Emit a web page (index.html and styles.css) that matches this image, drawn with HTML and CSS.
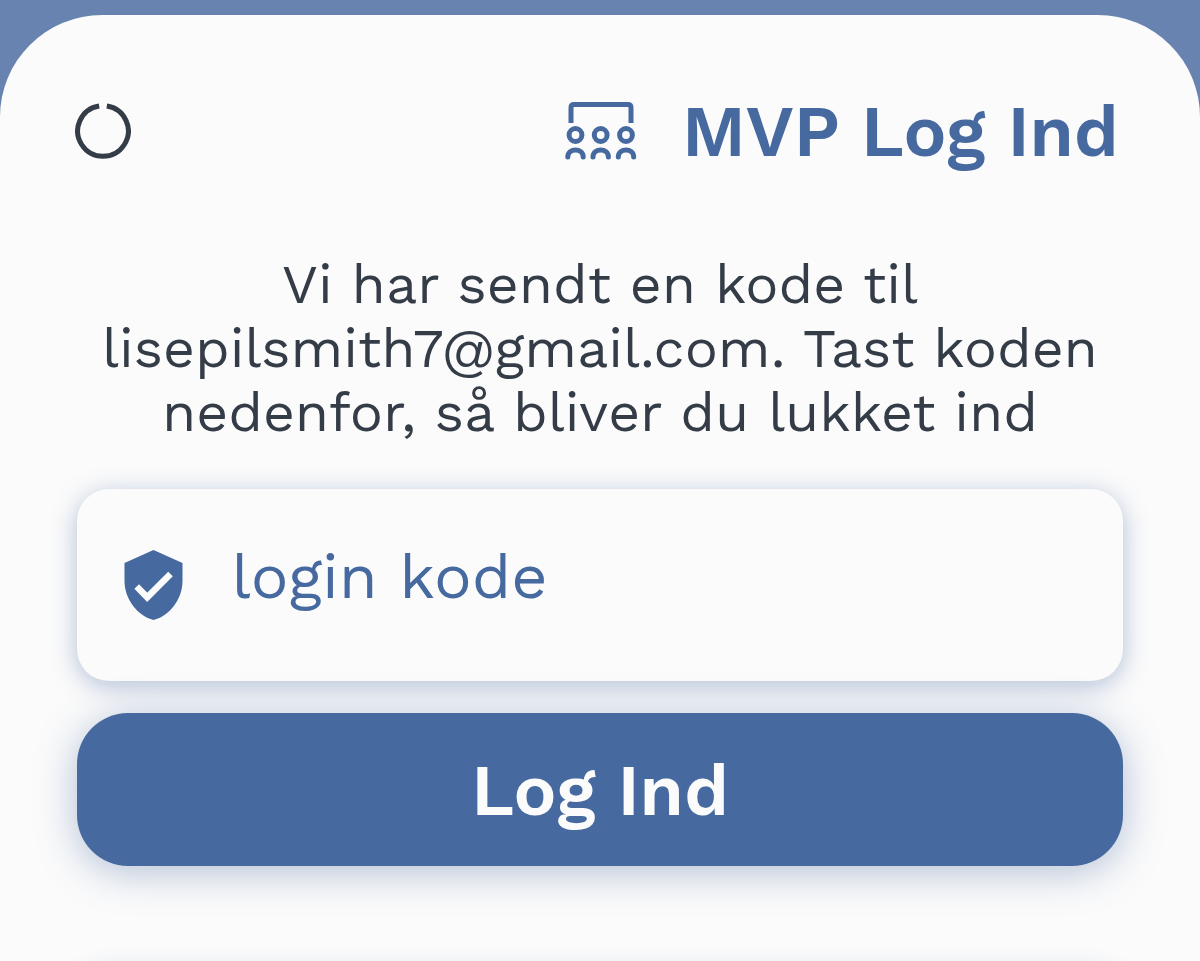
FILE: index.html
```html
<!DOCTYPE html>
<html lang="da">
<head>
<meta charset="utf-8">
<title>MVP Log Ind</title>
<link rel="stylesheet" href="styles.css">
</head>
<body>
<main class="sheet">
  <header class="header">
    <svg class="ring" viewBox="0 0 56 56" aria-hidden="true"><path d="M31.8 3A25.3 25.3 0 1 1 24.2 3"/></svg>
    <div class="brand">
      <svg class="people" viewBox="0 0 72 60" aria-hidden="true">
        <path d="M6 23V7.5Q6 4.5 9 4.5H63Q66 4.5 66 7.5V23"/>
        <circle cx="10.5" cy="35" r="6.4"/><circle cx="35.7" cy="35" r="6.4"/><circle cx="61" cy="35" r="6.4"/>
        <path class="round" d="M2.8 57C2.8 47.5 18.2 47.5 18.2 57M28 57C28 47.5 43.4 47.5 43.4 57M53.3 57C53.3 47.5 68.7 47.5 68.7 57"/>
      </svg>
      <h1 class="title">MVP Log Ind</h1>
    </div>
  </header>
  <p class="message">
    <span class="line">Vi har sendt en kode til</span>
    <span class="line">lisepilsmith7@gmail.com. Tast koden</span>
    <span class="line">nedenfor, så bliver du lukket ind</span>
  </p>
  <form class="form">
    <label class="field">
      <svg class="shield" viewBox="0 0 58 70" aria-hidden="true"><path d="M29 0L58 13V31C58 49 45 66 29 70C13 66 0 49 0 31V13Z"/><path class="check" d="M12.2 36.5L22.7 47.3L46 24"/></svg>
      <span class="placeholder">login kode</span>
    </label>
    <button class="submit" type="button">Log Ind</button>
  </form>
  <section class="next-card"></section>
</main>
</body>
</html>
```
FILE: styles.css
```css
* { box-sizing: border-box; }
body {
  margin: 0;
  height: 961px;
  padding-top: 15px;
  overflow: hidden;
  background: #6883b0;
  font-family: "Work Sans", "Open Sans", sans-serif;
}
.sheet {
  height: 946px;
  padding: 85px 77px 0;
  border-radius: 102px 102px 0 0;
  background: #fbfbfb;
  overflow: hidden;
}
.header {
  display: flex;
  justify-content: space-between;
  height: 64px;
}
.ring {
  width: 56px;
  height: 56px;
  margin: 3px 0 0 -2.5px;
  fill: none;
  stroke: #343c47;
  stroke-width: 5;
}
.brand { display: flex; }
.people {
  width: 72px;
  height: 60px;
  margin-right: 45px;
  fill: none;
  stroke: #46699f;
  stroke-width: 5;
}
.round { stroke-linecap: round; }
.title {
  width: 441px;
  margin: 0;
  color: #46699f;
  font-size: 71.7px;
  font-weight: 600;
  line-height: 63px;
  white-space: nowrap;
}
.message {
  margin: 88px 0 44.5px;
  color: #343c47;
  font-size: 55.4px;
  line-height: 64px;
  text-align: center;
}
.line {
  display: block;
  white-space: nowrap;
}
.form {
  display: flex;
  flex-direction: column;
  gap: 32px;
}
.field {
  display: flex;
  align-items: flex-start;
  height: 192px;
  padding: 61px 47px 0;
  border-radius: 32px;
  background: #fbfbfb;
  box-shadow: 0 5px 26px rgba(70, 105, 159, .4);
}
.shield {
  width: 59px;
  height: 70px;
  fill: #46699f;
}
.check {
  fill: none;
  stroke: #fbfbfb;
  stroke-width: 6.5;
}
.placeholder {
  margin: -10px 0 0 48.5px;
  color: #46699f;
  font-size: 63px;
  line-height: 72px;
  white-space: nowrap;
}
.submit {
  height: 153px;
  padding: 2px 0 0;
  border: 0;
  border-radius: 51px;
  background: #46699f;
  color: #fbfbfb;
  font: 600 71.7px/151px "Work Sans", "Open Sans", sans-serif;
  box-shadow: 0 6px 40px rgba(70, 105, 159, .4);
}
.next-card {
  height: 100px;
  margin-top: 104px;
  border-radius: 32px;
  background: #fbfbfb;
  box-shadow: 0 5px 26px rgba(70, 105, 159, .4);
}
```
